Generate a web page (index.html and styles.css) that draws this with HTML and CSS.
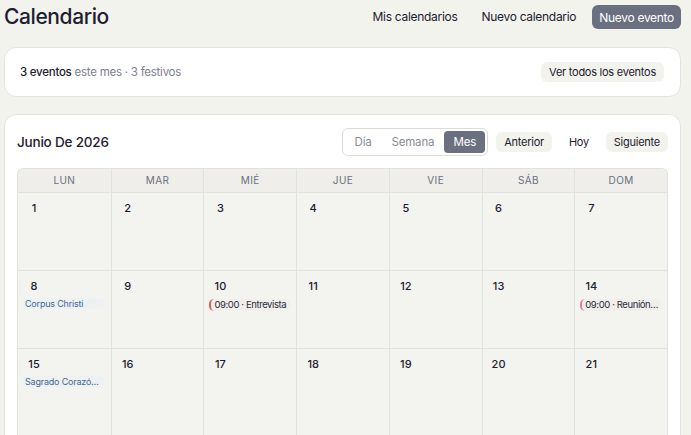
FILE: index.html
```html
<!DOCTYPE html>
<html lang="es">
<head>
    <meta charset="UTF-8">
    <meta name="viewport" content="width=device-width, initial-scale=1.0">
    <title>Calendario</title>
    <link rel="stylesheet" href="styles.css">
</head>
<body>
    <div class="page">
        <!-- Cabecera -->
        <header class="topbar">
            <h1>Calendario</h1>
            <nav class="actions">
                <button class="link-btn">Mis calendarios</button>
                <button class="link-btn">Nuevo calendario</button>
                <button class="primary-btn">Nuevo evento</button>
            </nav>
        </header>

        <!-- Resumen -->
        <section class="card summary">
            <p><strong>3 eventos</strong> este mes · 3 festivos</p>
            <button class="soft-btn">Ver todos los eventos</button>
        </section>

        <!-- Calendario mensual -->
        <section class="card month">
            <div class="month-head">
                <h2>Junio De 2026</h2>
                <div class="controls">
                    <div class="views">
                        <button>Día</button>
                        <button>Semana</button>
                        <button class="active">Mes</button>
                    </div>
                    <button class="soft-btn nav">Anterior</button>
                    <button class="link-btn nav">Hoy</button>
                    <button class="soft-btn nav">Siguiente</button>
                </div>
            </div>

            <div class="grid">
                <div class="wd">Lun</div>
                <div class="wd">Mar</div>
                <div class="wd">Mié</div>
                <div class="wd">Jue</div>
                <div class="wd">Vie</div>
                <div class="wd">Sáb</div>
                <div class="wd">Dom</div>

                <div class="day"><span class="num">1</span></div>
                <div class="day"><span class="num">2</span></div>
                <div class="day"><span class="num">3</span></div>
                <div class="day"><span class="num">4</span></div>
                <div class="day"><span class="num">5</span></div>
                <div class="day"><span class="num">6</span></div>
                <div class="day"><span class="num">7</span></div>

                <div class="day"><span class="num">8</span><div class="holiday">Corpus Christi</div></div>
                <div class="day"><span class="num">9</span></div>
                <div class="day"><span class="num">10</span><div class="event red">09:00 · Entrevista</div></div>
                <div class="day"><span class="num">11</span></div>
                <div class="day"><span class="num">12</span></div>
                <div class="day"><span class="num">13</span></div>
                <div class="day"><span class="num">14</span><div class="event pink">09:00 · Reunión de equipo</div></div>

                <div class="day"><span class="num">15</span><div class="holiday">Sagrado Corazón de Jesús</div></div>
                <div class="day"><span class="num">16</span></div>
                <div class="day"><span class="num">17</span></div>
                <div class="day"><span class="num">18</span></div>
                <div class="day"><span class="num">19</span></div>
                <div class="day"><span class="num">20</span></div>
                <div class="day"><span class="num">21</span></div>
            </div>
        </section>
    </div>
</body>
</html>
```

FILE: styles.css
```css
* {
    box-sizing: border-box;
}
body {
    margin: 0;
    font-family: Inter, "Open Sans", sans-serif;
    background-color: #f3f3ee;
    color: #1d2030;
}
button {
    font-family: inherit;
    border: none;
    background: none;
    cursor: pointer;
    color: #1d2030;
    white-space: nowrap;
}
.page {
    padding: 4px 10px 0 4px;
}
.topbar {
    display: flex;
    align-items: center;
    justify-content: space-between;
    height: 25px;
    margin-bottom: 18px;
}
h1 {
    margin: 0;
    font-size: 21px;
    font-weight: 500;
    letter-spacing: -0.4px;
}
.actions {
    display: flex;
    align-items: center;
}
.link-btn {
    font-size: 12px;
    padding: 5px 12px;
    letter-spacing: -0.3px;
}
.primary-btn {
    font-size: 12px;
    padding: 5px 7px;
    height: 24px;
    margin-left: 4px;
    color: #fff;
    background-color: #6b7080;
    border-radius: 6px;
    letter-spacing: -0.3px;
}
.card {
    background: #fff;
    border: 1px solid #e3e3dd;
    border-radius: 12px;
}
.summary {
    display: flex;
    align-items: center;
    justify-content: space-between;
    height: 50px;
    padding: 0 16px 0 15px;
    margin-bottom: 17px;
}
.summary p {
    margin: 0;
    font-size: 11.5px;
    color: #7d8090;
    letter-spacing: -0.25px;
}
.summary strong {
    color: #1d2030;
    font-weight: 500;
}
.soft-btn {
    font-size: 11px;
    padding: 3px 8px;
    background-color: #f3f3ee;
    border-radius: 6px;
    letter-spacing: -0.25px;
}
.month {
    padding: 13px 12px 0 12px;
    border-radius: 12px;
}
.month-head {
    display: flex;
    align-items: center;
    justify-content: space-between;
    margin-bottom: 12px;
}
h2 {
    margin: 0;
    font-size: 13.5px;
    font-weight: 500;
    letter-spacing: -0.2px;
}
.controls {
    display: flex;
    align-items: center;
    gap: 8px;
}
.views {
    display: flex;
    padding: 2px;
    border: 1px solid #dcdcd6;
    border-radius: 6px;
}
.views button {
    font-size: 11.5px;
    color: #8a8d98;
    padding: 3px 10px;
    height: 22px;
    border-radius: 4px;
    letter-spacing: -0.2px;
}
.views .active {
    color: #fff;
    background-color: #6b7080;
    width: 41px;
    padding: 3px 0;
}
.nav {
    font-size: 11px;
    padding: 3px 8px;
    height: 20px;
}
.link-btn.nav {
    padding: 3px 9px;
}
.grid {
    display: grid;
    grid-template-columns: repeat(7, 1fr);
    border: 1px solid #e2e2dc;
    border-bottom: none;
    border-radius: 6px 6px 0 0;
    overflow: hidden;
    background: #f3f3ef;
}
.wd {
    height: 24px;
    line-height: 23px;
    text-align: center;
    font-size: 10px;
    letter-spacing: 0.4px;
    text-transform: uppercase;
    color: #6b6f7e;
    background: #efeeea;
    border-bottom: 1px solid #e2e2dc;
    border-left: 1px solid #e2e2dc;
}
.wd:nth-child(7n+1) {
    border-left: none;
}
.day {
    height: 78px;
    padding: 7px 6px 0 5px;
    border-left: 1px solid #e2e2dc;
    border-bottom: 1px solid #e2e2dc;
    min-width: 0;
}
.grid .day:nth-child(7n+1) {
    border-left: none;
}
/* última semana visible: sin borde inferior */
.grid .day:nth-child(n+22) {
    height: 100px;
    border-bottom: none;
}
.num {
    display: block;
    width: 22px;
    height: 16px;
    line-height: 16px;
    text-align: center;
    font-size: 11px;
    font-weight: 500;
    color: #1d2030;
    margin-bottom: 4px;
}
.holiday {
    font-size: 9px;
    line-height: 11px;
    color: #3f6a92;
    background: #edf1f2;
    border-radius: 4px;
    padding: 0 2px;
    width: 81px;
    white-space: nowrap;
    overflow: hidden;
    text-overflow: ellipsis;
    letter-spacing: -0.2px;
}
.event {
    font-size: 9.5px;
    line-height: 12px;
    width: 81px;
    color: #2a2d3a;
    background: #f1eeec;
    border-radius: 5px;
    border-left: 2px solid #e05a5a;
    padding: 0 2px 0 3px;
    margin-top: 5px;
    white-space: nowrap;
    overflow: hidden;
    text-overflow: ellipsis;
    letter-spacing: -0.4px;
}
.event.pink {
    border-left-color: #e27bb0;
}
```
